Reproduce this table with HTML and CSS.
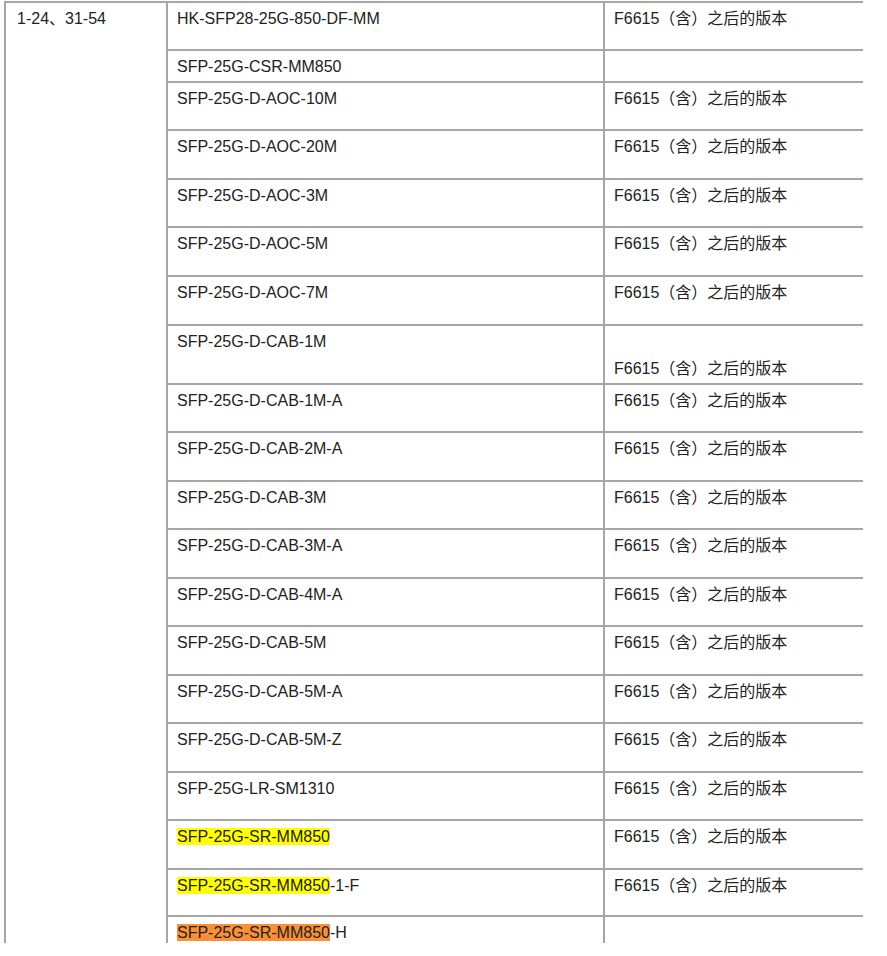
FILE: index.html
```html
<!DOCTYPE html>
<html>
<head>
<meta charset="utf-8">
<link rel="stylesheet" href="styles.css">
</head>
<body>
<div class="frame">
<table class="grid">
<colgroup><col class="c1"><col class="c2"><col class="c3"></colgroup>
<tbody>
<tr class="h48"><td class="port" rowspan="20">1-24、31-54</td><td>HK-SFP28-25G-850-DF-MM</td><td>F6615（含）之后的版本</td></tr>
<tr class="h32"><td>SFP-25G-CSR-MM850</td><td></td></tr>
<tr class="h48"><td>SFP-25G-D-AOC-10M</td><td>F6615（含）之后的版本</td></tr>
<tr class="h49"><td>SFP-25G-D-AOC-20M</td><td>F6615（含）之后的版本</td></tr>
<tr class="h48"><td>SFP-25G-D-AOC-3M</td><td>F6615（含）之后的版本</td></tr>
<tr class="h49"><td>SFP-25G-D-AOC-5M</td><td>F6615（含）之后的版本</td></tr>
<tr class="h49"><td>SFP-25G-D-AOC-7M</td><td>F6615（含）之后的版本</td></tr>
<tr class="h59"><td>SFP-25G-D-CAB-1M</td><td class="bottom">F6615（含）之后的版本</td></tr>
<tr class="h48"><td>SFP-25G-D-CAB-1M-A</td><td>F6615（含）之后的版本</td></tr>
<tr class="h49"><td>SFP-25G-D-CAB-2M-A</td><td>F6615（含）之后的版本</td></tr>
<tr class="h48"><td>SFP-25G-D-CAB-3M</td><td>F6615（含）之后的版本</td></tr>
<tr class="h49"><td>SFP-25G-D-CAB-3M-A</td><td>F6615（含）之后的版本</td></tr>
<tr class="h48"><td>SFP-25G-D-CAB-4M-A</td><td>F6615（含）之后的版本</td></tr>
<tr class="h49"><td>SFP-25G-D-CAB-5M</td><td>F6615（含）之后的版本</td></tr>
<tr class="h48"><td>SFP-25G-D-CAB-5M-A</td><td>F6615（含）之后的版本</td></tr>
<tr class="h49"><td>SFP-25G-D-CAB-5M-Z</td><td>F6615（含）之后的版本</td></tr>
<tr class="h48"><td>SFP-25G-LR-SM1310</td><td>F6615（含）之后的版本</td></tr>
<tr class="h49"><td><span class="hl-yellow">SFP-25G-SR-MM850</span></td><td>F6615（含）之后的版本</td></tr>
<tr class="h47"><td><span class="hl-yellow">SFP-25G-SR-MM850</span>-1-F</td><td>F6615（含）之后的版本</td></tr>
<tr class="h48"><td><span class="hl-orange">SFP-25G-SR-MM850</span>-H</td><td></td></tr>
</tbody>
</table>
</div>
</body>
</html>
```

FILE: styles.css
```css
html, body {
  margin: 0;
  padding: 0;
  background: #ffffff;
}

body {
  font-family: "Liberation Sans", Arial, "Noto Sans CJK SC", sans-serif;
  font-size: 16px;
  color: #222222;
}

.frame {
  margin: 1px 0 0 4px;
  width: 859px;
  height: 942px;
  overflow: hidden;
}

.grid {
  border-collapse: separate;
  border-spacing: 0;
  table-layout: fixed;
  width: 1000px;
}

.c1 { width: 162px; }
.c2 { width: 437px; }
.c3 { width: 401px; }

.grid td {
  box-sizing: border-box;
  border-left: 2px solid #a6a6a6;
  border-top: 2px solid #a6a6a6;
  padding: 5px 8px 0 9px;
  vertical-align: top;
  line-height: 21px;
  white-space: nowrap;
}

.grid td.port {
  padding-left: 11px;
}

.grid td.bottom {
  vertical-align: bottom;
  padding-bottom: 4px;
}

.h32 { height: 32px; }
.h47 { height: 47px; }
.h48 { height: 48px; }
.h49 { height: 49px; }
.h59 { height: 59px; }

.hl-yellow { background: #ffff00; }
.hl-orange { background: #fa8f35; }
```
